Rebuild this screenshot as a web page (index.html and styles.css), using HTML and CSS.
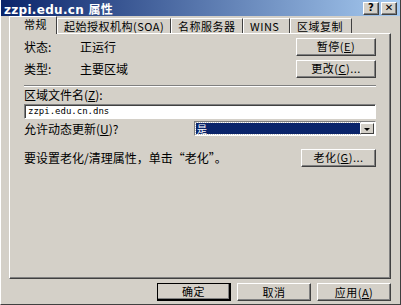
FILE: index.html
```html
<!DOCTYPE html>
<html lang="zh">
<head>
    <meta charset="UTF-8">
    <title>zzpi.edu.cn 属性</title>
    <link rel="stylesheet" href="styles.css">
</head>
<body>
<div class="window">
    <div class="titlebar">
        <span class="title">zzpi.edu.cn 属性</span>
        <div class="title-btns">
            <span class="tbtn">?</span>
            <span class="tbtn">&#x2715;</span>
        </div>
    </div>

    <div class="content">
        <div class="tabs">
            <div class="tab active">常规</div>
            <div class="tab">起始授权机构(SOA)</div>
            <div class="tab">名称服务器</div>
            <div class="tab">WINS</div>
            <div class="tab">区域复制</div>
        </div>

        <div class="panel">
            <div class="row">
                <span class="label">状态:</span>
                <span class="value">正运行</span>
                <button class="btn wide">暂停(<u>E</u>)</button>
            </div>
            <div class="row">
                <span class="label">类型:</span>
                <span class="value">主要区域</span>
                <button class="btn wide">更改(<u>C</u>)...</button>
            </div>

            <div class="sep"></div>

            <div class="field-label">区域文件名(<u>Z</u>):</div>
            <div class="input">zzpi.edu.cn.dns</div>

            <div class="row update-row">
                <span class="update-label">允许动态更新(<u>U</u>)?</span>
                <div class="select">
                    <span class="select-val">是</span>
                    <span class="select-arrow"></span>
                </div>
            </div>

            <div class="row aging-row">
                <span class="aging-text">要设置老化/清理属性，单击“老化”。</span>
                <button class="btn">老化(<u>G</u>)...</button>
            </div>
        </div>

        <div class="footer">
            <button class="btn foot default">确定</button>
            <button class="btn foot">取消</button>
            <button class="btn foot">应用(<u>A</u>)</button>
        </div>
    </div>
</div>
</body>
</html>
```

FILE: styles.css
```css
body {
    margin: 0;
    background: #d4d0c8;
    font-family: "Noto Sans CJK SC", "DejaVu Sans", sans-serif;
    font-size: 12px;
    color: #000;
}

.window {
    width: 401px;
    height: 305px;
    box-sizing: border-box;
    background: #d4d0c8;
    border-left: 1px solid #ffffff;
    border-right: 1px solid #404040;
    border-bottom: 1px solid #404040;
    display: flex;
    flex-direction: column;
    overflow: hidden;
}

.titlebar {
    height: 16px;
    flex-shrink: 0;
    background: linear-gradient(to right, #0a246a, #a6caf0);
    display: flex;
    align-items: center;
    justify-content: space-between;
    padding: 0 3px 0 3px;
}

.title {
    color: #fff;
    font-family: "DejaVu Sans", "Noto Sans CJK SC", sans-serif;
    font-weight: bold;
    font-size: 12px;
    letter-spacing: 0.3px;
}

.title-btns {
    display: flex;
    gap: 2px;
}

.tbtn {
    width: 16px;
    height: 13px;
    box-sizing: border-box;
    background: #d4d0c8;
    border-top: 1px solid #fff;
    border-left: 1px solid #fff;
    border-right: 1px solid #404040;
    border-bottom: 1px solid #404040;
    box-shadow: inset -1px -1px 0 #808080;
    display: flex;
    align-items: center;
    justify-content: center;
    font-family: "DejaVu Sans", sans-serif;
    font-weight: bold;
    font-size: 10px;
    line-height: 1;
}

.content {
    flex: 1;
    display: flex;
    flex-direction: column;
    padding: 1px 9px 0 8px;
}

.tabs {
    display: flex;
    height: 16px;
    align-items: flex-end;
    padding-left: 2px;
    position: relative;
    z-index: 1;
}

.tab {
    height: 15px;
    box-sizing: border-box;
    padding: 0 6px;
    border-top: 1px solid #fff;
    border-left: 1px solid #fff;
    border-right: 1px solid #404040;
    line-height: 14px;
    font-size: 11px;
    letter-spacing: 0.5px;
    white-space: nowrap;
}

.tab:nth-child(2) { width: 114px; }
.tab:nth-child(3) { width: 72px; }
.tab:nth-child(4) { width: 47px; }
.tab:nth-child(5) { width: 62px; }

.tab.active {
    width: 48px;
    height: 18px;
    margin-bottom: -1px;
    margin-left: -2px;
    padding-left: 14px;
    background: #d4d0c8;
    line-height: 15px;
}

.panel {
    height: 246px;
    flex-shrink: 0;
    box-sizing: border-box;
    border-top: 1px solid #fff;
    border-left: 1px solid #fff;
    border-right: 1px solid #404040;
    border-bottom: 1px solid #404040;
    box-shadow: inset -1px -1px 0 #808080;
    padding: 2px 14px 0 14px;
    display: flex;
    flex-direction: column;
}

.row {
    display: flex;
    align-items: center;
    height: 21px;
    margin-bottom: 1px;
}

.label {
    width: 56px;
}

.value {
    flex: 1;
}

.btn {
    font-family: "Noto Sans CJK SC", "DejaVu Sans", sans-serif;
    font-size: 11px;
    background: #d4d0c8;
    color: #000;
    height: 18px;
    box-sizing: border-box;
    padding: 0;
    border-top: 1px solid #fff;
    border-left: 1px solid #fff;
    border-right: 1px solid #404040;
    border-bottom: 1px solid #404040;
    box-shadow: inset -1px -1px 0 #808080;
    line-height: 15px;
    letter-spacing: 0.5px;
}

.btn.wide {
    width: 80px;
}

.sep {
    height: 0;
    border-top: 1px solid #808080;
    border-bottom: 1px solid #fff;
    margin: 5px 0 0 0;
}

.field-label {
    height: 14px;
    line-height: 14px;
    margin: 1px 0 2px 0;
}

.input {
    height: 15px;
    box-sizing: border-box;
    background: #fff;
    border-top: 1px solid #808080;
    border-left: 1px solid #808080;
    border-right: 1px solid #fff;
    border-bottom: 1px solid #fff;
    box-shadow: inset 1px 1px 0 #404040;
    padding-left: 3px;
    font-family: "DejaVu Sans Mono", monospace;
    font-size: 9px;
    line-height: 13px;
}

.update-row {
    margin-top: 2px;
    height: 15px;
}

.update-label {
    flex: 1;
}

.select {
    width: 182px;
    height: 15px;
    box-sizing: border-box;
    background: #fff;
    border-top: 1px solid #808080;
    border-left: 1px solid #808080;
    border-right: 1px solid #fff;
    border-bottom: 1px solid #fff;
    display: flex;
    padding: 1px;
}

.select-val {
    flex: 1;
    background: #0a246a;
    color: #fff;
    font-size: 10px;
    line-height: 11px;
    padding-left: 1px;
    outline: 1px dotted #c0c0c0;
}

.select-arrow {
    width: 14px;
    box-sizing: border-box;
    background: #d4d0c8;
    border-top: 1px solid #fff;
    border-left: 1px solid #fff;
    border-right: 1px solid #404040;
    border-bottom: 1px solid #404040;
    position: relative;
}

.select-arrow::after {
    content: "";
    position: absolute;
    left: 3px;
    top: 4px;
    border-left: 3px solid transparent;
    border-right: 3px solid transparent;
    border-top: 3px solid #000;
}

.aging-row {
    margin-top: 10px;
}

.aging-text {
    flex: 1;
}

.aging-row .btn {
    width: 75px;
}

.footer {
    display: flex;
    justify-content: flex-end;
    gap: 6px;
    padding-top: 4px;
}

.btn.foot {
    width: 74px;
    height: 18px;
}

.btn.default {
    outline: 1px solid #000;
    outline-offset: -1px;
    border-right: 2px solid #000;
    border-bottom: 2px solid #000;
}
```
